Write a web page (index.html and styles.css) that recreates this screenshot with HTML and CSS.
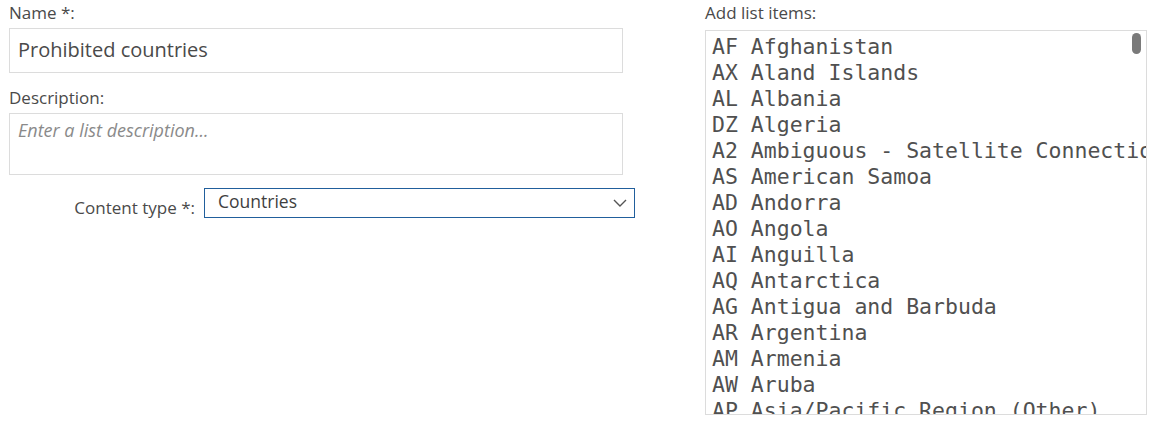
FILE: index.html
```html
<!DOCTYPE html>
<html lang="en">
<head>
  <meta charset="UTF-8" />
  <title>Edit list</title>
  <link rel="stylesheet" href="styles.css">
</head>
<body>

<div class="formulario">
  <!-- Columna izquierda -->
  <div class="columna-izq">
    <label class="etiqueta">Name *:</label>
    <div class="campo campo-nombre">Prohibited countries</div>

    <label class="etiqueta etiqueta-desc">Description:</label>
    <div class="campo campo-desc"><span class="placeholder">Enter a list description...</span></div>

    <div class="fila-tipo">
      <label class="etiqueta etiqueta-tipo">Content type *:</label>
      <div class="selector">
        <span>Countries</span>
        <svg class="chevron" width="14" height="8" viewBox="0 0 14 8">
          <path d="M1 1 L7 7 L13 1" fill="none" stroke="#555" stroke-width="1.4"/>
        </svg>
      </div>
    </div>
  </div>

  <!-- Columna derecha -->
  <div class="columna-der">
    <label class="etiqueta">Add list items:</label>
    <div class="caja-lista">
      <div class="lista">AF Afghanistan
AX Aland Islands
AL Albania
DZ Algeria
A2 Ambiguous - Satellite Connection
AS American Samoa
AD Andorra
AO Angola
AI Anguilla
AQ Antarctica
AG Antigua and Barbuda
AR Argentina
AM Armenia
AW Aruba
AP Asia/Pacific Region (Other)
AU Australia
AT Austria</div>
      <div class="scroll-thumb"></div>
    </div>
  </div>
</div>

</body>
</html>
```

FILE: styles.css
```css
* { margin: 0; padding: 0; box-sizing: border-box; }
body {
  background: white;
  font-family: "Open Sans", "Noto Sans", sans-serif;
  color: #474747;
  overflow: hidden;
}

.formulario {
  display: flex;
  padding-top: 2px;
}

.columna-izq {
  width: 635px;
  margin-left: 9px;
  display: flex;
  flex-direction: column;
}

.columna-der {
  margin-left: 61px;
  width: 442px;
  display: flex;
  flex-direction: column;
}

.etiqueta {
  font-size: 17px;
  line-height: 21px;
  color: #4a4a4a;
}

.campo {
  border: 1px solid #dcdcdc;
  width: 614px;
  padding: 0 8px;
}

.campo-nombre {
  margin-top: 5px;
  height: 45px;
  line-height: 41px;
  font-size: 20px;
  color: #4a4a4a;
}

.etiqueta-desc {
  margin-top: 14px;
}

.campo-desc {
  margin-top: 5px;
  height: 62px;
  padding-top: 4px;
}

.placeholder {
  font-style: italic;
  font-size: 18px;
  color: #8a8a8a;
}

.fila-tipo {
  display: flex;
  align-items: center;
  margin-top: 13px;
}

.etiqueta-tipo {
  width: 195px;
  text-align: right;
  padding-right: 9px;
  margin-top: 8px;
}

.selector {
  width: 431px;
  height: 30px;
  border: 1px solid #215f9c;
  display: flex;
  align-items: center;
  justify-content: space-between;
  padding: 0 7px 0 13px;
  font-size: 17.5px;
  color: #3f3f3f;
}

.selector span {
  margin-top: -4px;
}

.caja-lista {
  position: relative;
  margin-top: 7px;
  height: 385px;
  border: 1px solid #dcdcdc;
  overflow: hidden;
}

.lista {
  white-space: pre;
  font-family: "DejaVu Sans Mono", "Liberation Mono", monospace;
  font-size: 21.5px;
  line-height: 26px;
  color: #505050;
  padding: 3px 6px;
}

/* Barra de desplazamiento superpuesta */
.scroll-thumb {
  position: absolute;
  top: 2px;
  right: 5px;
  width: 9px;
  height: 21px;
  border-radius: 5px;
  background: #7a7a7a;
}
```
